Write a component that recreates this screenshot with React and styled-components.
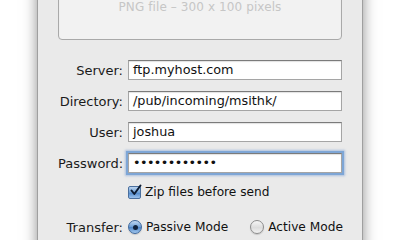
import React from "react";
import styled, { createGlobalStyle } from "styled-components";

const Global = createGlobalStyle`
  html, body { margin: 0; padding: 0; background: #ffffff; overflow: hidden; }
  body { font-family: "DejaVu Sans", "Liberation Sans", sans-serif; }
`;

const Page = styled.div`
  width: 400px;
  height: 240px;
  overflow: hidden;
  background: #ffffff;
`;

const Window = styled.div`
  margin: -60px 0 0 38px;
  width: 324px;
  height: 320px;
  box-sizing: border-box;
  padding: 20px 20px 0 20px;
  background: #eaeaea;
  box-shadow: 0 0 14px rgba(0, 0, 0, 0.5), 0 0 0 1px rgba(0, 0, 0, 0.18);
`;

const ImageWell = styled.div`
  height: 80px;
  box-sizing: border-box;
  border: 1px solid #a9a9a9;
  border-radius: 4px;
  background: #f2f2f2;
  box-shadow: inset 0 1px 2px rgba(0, 0, 0, 0.06);
  display: flex;
  align-items: flex-end;
  justify-content: center;
  padding-bottom: 25px;
  color: #c6c6c6;
  font-size: 12px;
  letter-spacing: 0.1px;
`;

const Form = styled.div`
  margin-top: 20px;
  display: grid;
  grid-template-columns: 65px minmax(0, 1fr);
  column-gap: 5px;
  row-gap: 11px;
  align-items: center;
`;

const Label = styled.div`
  text-align: right;
  font-size: 13px;
  color: #1a1a1a;
  white-space: nowrap;
  margin-top: ${(p) => p.$mt || 0}px;
`;

const Field = styled.div`
  height: 20px;
  box-sizing: border-box;
  background: #ffffff;
  border: 1px solid #a5a5a5;
  border-top-color: #7b7b7b;
  box-shadow: inset 0 1px 1px rgba(0, 0, 0, 0.12)${(p) =>
    p.$focus ? ", 0 0 0 2px #7ea6d6, 0 0 2px 3px rgba(110,150,210,0.5)" : ""};
  padding: 0 4px;
  font-size: 12.8px;
  line-height: 18px;
  color: #111;
  white-space: nowrap;
  overflow: hidden;
  letter-spacing: ${(p) => (p.$dots ? "-0.6px" : "0")};
`;

const OptionRow = styled.div`
  display: flex;
  align-items: center;
  gap: 22px;
  font-size: 12.2px;
  color: #111;
  height: 20px;
  margin-top: ${(p) => p.$mt || 0}px;
  min-width: 0;
`;

const Option = styled.label`
  display: flex;
  align-items: center;
  gap: 4px;
  white-space: nowrap;
`;

const Box = styled.span`
  width: 13px;
  height: 13px;
  box-sizing: border-box;
  border: 1px solid #4a6f9e;
  border-radius: 2px;
  background: linear-gradient(#bcd5f1, #6d9fd6 50%, #4c85c9 51%, #9cc2ec);
  position: relative;
  display: inline-block;
`;

const Radio = styled.span`
  width: 14px;
  height: 14px;
  box-sizing: border-box;
  border-radius: 50%;
  display: inline-flex;
  align-items: center;
  justify-content: center;
  border: 1px solid ${(p) => (p.$on ? "#3d679c" : "#8c8c8c")};
  background: ${(p) =>
    p.$on
      ? "linear-gradient(#c3daf3, #6a9dd5 50%, #4a82c6 51%, #a3c8ee)"
      : "linear-gradient(#f6f6f6, #dcdcdc 55%, #f2f2f2)"};
  box-shadow: 0 1px 1px rgba(0, 0, 0, 0.15);
`;

const Dot = styled.span`
  width: 5px;
  height: 5px;
  border-radius: 50%;
  background: #11233d;
`;

const Spacer = styled.div``;

export default function App() {
  return (
    <Page>
      <Global />
      <Window>
        <ImageWell>PNG file – 300 x 100 pixels</ImageWell>
        <Form>
          <Label>Server:</Label>
          <Field>ftp.myhost.com</Field>
          <Label>Directory:</Label>
          <Field>/pub/incoming/msithk/</Field>
          <Label>User:</Label>
          <Field>joshua</Field>
          <Label>Password:</Label>
          <Field $focus $dots>
            ••••••••••••
          </Field>
          <Spacer />
          <OptionRow $mt={-2}>
            <Option>
              <Box>
                <svg
                  width="14"
                  height="14"
                  viewBox="0 0 14 14"
                  style={{ position: "absolute", left: 0, top: -3 }}
                >
                  <path
                    d="M2.5 6.5 L5.3 10 L11.5 1.5"
                    fill="none"
                    stroke="#0d1c33"
                    strokeWidth="2"
                    strokeLinecap="round"
                    strokeLinejoin="round"
                  />
                </svg>
              </Box>
              Zip files before send
            </Option>
          </OptionRow>
          <Label $mt={4}>Transfer:</Label>
          <OptionRow $mt={4}>
            <Option>
              <Radio $on>
                <Dot />
              </Radio>
              Passive Mode
            </Option>
            <Option>
              <Radio />
              Active Mode
            </Option>
          </OptionRow>
        </Form>
      </Window>
    </Page>
  );
}
